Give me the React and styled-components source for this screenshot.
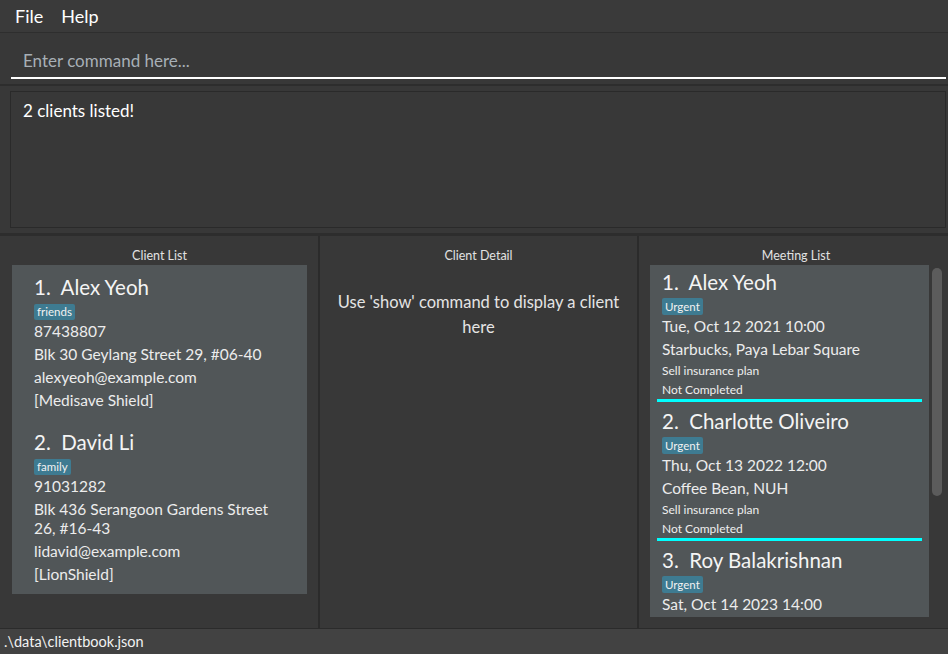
import React from "react";
import styled, { createGlobalStyle } from "styled-components";

const clients = [
  {
    name: "Alex Yeoh",
    tag: "friends",
    phone: "87438807",
    address: "Blk 30 Geylang Street 29, #06-40",
    email: "alexyeoh@example.com",
    plan: "[Medisave Shield]",
  },
  {
    name: "David Li",
    tag: "family",
    phone: "91031282",
    address: "Blk 436 Serangoon Gardens Street 26, #16-43",
    email: "lidavid@example.com",
    plan: "[LionShield]",
  },
];

// the third row is cut off by the list viewport, so only its visible part is listed
const meetings = [
  {
    name: "Alex Yeoh",
    tag: "Urgent",
    date: "Tue, Oct 12 2021 10:00",
    place: "Starbucks, Paya Lebar Square",
    desc: "Sell insurance plan",
    status: "Not Completed",
  },
  {
    name: "Charlotte Oliveiro",
    tag: "Urgent",
    date: "Thu, Oct 13 2022 12:00",
    place: "Coffee Bean, NUH",
    desc: "Sell insurance plan",
    status: "Not Completed",
  },
  {
    name: "Roy Balakrishnan",
    tag: "Urgent",
    date: "Sat, Oct 14 2023 14:00",
  },
];

const GlobalStyle = createGlobalStyle`
  * {
    box-sizing: border-box;
  }
  body {
    margin: 0;
    background-color: #383838;
    font-family: "Lato", "Noto Sans", sans-serif;
    color: #f2f2f2;
  }
`;

const Window = styled.div`
  width: 948px;
  height: 654px;
  display: flex;
  flex-direction: column;
  background-color: #2b2b2b;
  overflow: hidden;
`;

const MenuBar = styled.div`
  height: 33px;
  flex-shrink: 0;
  display: flex;
  align-items: center;
  padding-left: 15px;
  gap: 18px;
  background-color: #3a3a3a;
  border-bottom: 1px solid #2e2e2e;
`;

const MenuItem = styled.span`
  font-size: 18px;
  color: #ffffff;
`;

const CommandBox = styled.div`
  height: 53px;
  flex-shrink: 0;
  padding: 14px 2px 0 11px;
  background-color: #383838;
  border-bottom: 2px solid #2d2d2d;
`;

const CommandInput = styled.input`
  display: block;
  width: 100%;
  height: 32px;
  padding: 0 0 3px 12px;
  background: transparent;
  border: none;
  border-bottom: 2px solid #ffffff;
  font-family: inherit;
  font-size: 17px;
  color: #ffffff;
  outline: none;
  &::placeholder {
    color: #a7afb6;
  }
`;

const ResultArea = styled.div`
  height: 150px;
  flex-shrink: 0;
  padding: 5px 2px 5px 10px;
  background-color: #383838;
  border-bottom: 3px solid #2d2d2d;
`;

const ResultBox = styled.div`
  height: 100%;
  border: 1px solid #2a2a2a;
  padding: 8px 12px;
  font-size: 17px;
  color: #ffffff;
`;

const Panels = styled.div`
  flex: 1;
  min-height: 0;
  display: grid;
  grid-template-columns: 318px 317px 1fr;
  gap: 2px;
  background-color: #2b2b2b;
`;

const Panel = styled.div`
  background-color: #383838;
  display: flex;
  flex-direction: column;
  padding: 12px ${(p) => p.$right ?? 11}px 0 ${(p) => p.$left ?? 12}px;
  overflow: hidden;
`;

const PanelTitle = styled.div`
  font-size: 12.5px;
  line-height: 15px;
  text-align: center;
  color: #e2e2e2;
  margin-bottom: 2px;
`;

const Card = styled.div`
  background-color: #515658;
`;

const ClientCell = styled.div`
  padding: 9px 20px 8px 22px;
  & + & {
    padding-top: 9px;
  }
`;

const Name = styled.div`
  font-size: 20.5px;
  line-height: 26px;
  white-space: pre;
  color: #f4f4f4;
`;

const Tag = styled.span`
  display: inline-block;
  margin-top: ${(p) => p.$top ?? 2}px;
  padding: 0 3px;
  height: ${(p) => p.$h ?? 16}px;
  line-height: ${(p) => p.$h ?? 16}px;
  font-size: 11.5px;
  background-color: #3e7b91;
  border-radius: 2px;
  color: #f2f2f2;
`;

const Detail = styled.div`
  font-size: 15.5px;
  line-height: 19px;
  padding: 2px 0;
  color: #ececec;
`;

const Small = styled.div`
  font-size: 12px;
  line-height: 19px;
  color: #eeeeee;
`;

const EmptyNote = styled.div`
  margin-top: 25px;
  padding: 0 14px;
  text-align: center;
  font-size: 16.5px;
  line-height: 25px;
  color: #e4e4e4;
`;

const MeetingWrap = styled.div`
  display: flex;
  gap: 3px;
  height: 352px;
`;

const MeetingList = styled(Card)`
  width: 280px;
  overflow: hidden;
`;

const MeetingCell = styled.div`
  padding: 4px 7px 0;
  margin-bottom: 2px;
`;

const MeetingBody = styled.div`
  padding-left: 5px;
  border-bottom: ${(p) => (p.$line ? "3px solid #00ffff" : "none")};
`;

const ScrollTrack = styled.div`
  width: 10px;
  padding-top: 3px;
`;

const ScrollThumb = styled.div`
  height: 228px;
  border-radius: 5px;
  background-color: #5c5c5c;
`;

const StatusBar = styled.div`
  height: 26px;
  flex-shrink: 0;
  padding-left: 4px;
  display: flex;
  align-items: center;
  font-size: 14.5px;
  background-color: #424242;
  border-top: 1px solid #2b2b2b;
  color: #f2f2f2;
`;

const MeetingItem = ({ index, meeting }) => (
  <MeetingCell>
    <MeetingBody $line={!!meeting.status}>
      <Name>{`${index}.  ${meeting.name}`}</Name>
      <Tag $top={1} $h={17}>
        {meeting.tag}
      </Tag>
      <Detail>{meeting.date}</Detail>
      {meeting.place && <Detail>{meeting.place}</Detail>}
      {meeting.desc && <Small>{meeting.desc}</Small>}
      {meeting.status && <Small>{meeting.status}</Small>}
    </MeetingBody>
  </MeetingCell>
);

export default function App() {
  return (
    <>
      <GlobalStyle />
      <Window>
        <MenuBar>
          <MenuItem>File</MenuItem>
          <MenuItem>Help</MenuItem>
        </MenuBar>
        <CommandBox>
          <CommandInput placeholder="Enter command here..." />
        </CommandBox>
        <ResultArea>
          <ResultBox>2 clients listed!</ResultBox>
        </ResultArea>
        <Panels>
          <Panel>
            <PanelTitle>Client List</PanelTitle>
            <Card>
              {clients.map((c, i) => (
                <ClientCell key={c.name}>
                  <Name>{`${i + 1}.  ${c.name}`}</Name>
                  <Tag>{c.tag}</Tag>
                  <Detail>{c.phone}</Detail>
                  <Detail>{c.address}</Detail>
                  <Detail>{c.email}</Detail>
                  <Detail>{c.plan}</Detail>
                </ClientCell>
              ))}
            </Card>
          </Panel>
          <Panel $left={1} $right={1}>
            <PanelTitle>Client Detail</PanelTitle>
            <EmptyNote>Use 'show' command to display a client here</EmptyNote>
          </Panel>
          <Panel $left={11} $right={6}>
            <PanelTitle>Meeting List</PanelTitle>
            <MeetingWrap>
              <MeetingList>
                {meetings.map((m, i) => (
                  <MeetingItem key={m.name} index={i + 1} meeting={m} />
                ))}
              </MeetingList>
              <ScrollTrack>
                <ScrollThumb />
              </ScrollTrack>
            </MeetingWrap>
          </Panel>
        </Panels>
        <StatusBar>.\data\clientbook.json</StatusBar>
      </Window>
    </>
  );
}
